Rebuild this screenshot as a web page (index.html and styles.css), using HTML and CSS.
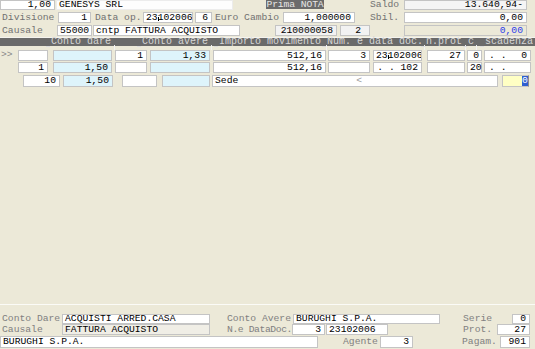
FILE: index.html
```html
<!DOCTYPE html>
<html>
<head>
<meta charset="utf-8">
<link rel="stylesheet" href="styles.css">
</head>
<body>
<div class="row r1">
  <div class="f r w55">1,00</div>
  <div class="f gen">GENESYS SRL</div>
  <div class="badge">Prima NOTA</div>
  <div class="l saldo">Saldo</div>
  <div class="f r big soft">13.640,94-</div>
</div>
<div class="row r2">
  <div class="l divis">Divisione</div>
  <div class="f r w33">1</div>
  <div class="l dataop">Data op.</div>
  <div class="f dt">23<span class="caret"></span>102006</div>
  <div class="f r w17 ml2">6</div>
  <div class="l euro">Euro Cambio</div>
  <div class="f r w72">1,000000</div>
  <div class="l sbil">Sbil.</div>
  <div class="f r big">0,00</div>
</div>
<div class="row r3">
  <div class="l caus">Causale</div>
  <div class="f w35">55000</div>
  <div class="f cntp">cntp FATTURA ACQUISTO</div>
  <div class="f r grey num9">210000058</div>
  <div class="f r grey two">2</div>
  <div class="f r big beige blue ml34">0,00</div>
</div>
<div class="hd">
  <div class="hc c0"></div>
  <div class="hc c1"><span>Conto dare</span></div>
  <div class="hc c2"><span>Conto avere</span></div>
  <div class="hc c3"><span>Importo movimento</span></div>
  <div class="hc c4"><span>Num. e data doc.</span></div>
  <div class="hc c5"><span>n.prot</span></div>
  <div class="hc c6"><span>c</span></div>
  <div class="hc c7"><span>scadenza</span></div>
</div>
<div class="row ga">
  <div class="l arrow">&gt;&gt;</div>
  <div class="f r a1"></div>
  <div class="f r cy a2"></div>
  <div class="f r a3">1</div>
  <div class="f r cy a4">1,33</div>
  <div class="f r a5">512,16</div>
  <div class="f r a6">3</div>
  <div class="f a7">23<span class="caret"></span>102006</div>
  <div class="f r a8">27</div>
  <div class="f r a9">0</div>
  <div class="f sc a10"><span>. .</span><span>0</span></div>
</div>
<div class="row gb">
  <div class="l arrow"></div>
  <div class="f r a1">1</div>
  <div class="f r cy a2">1,50</div>
  <div class="f r a3"></div>
  <div class="f r cy a4"></div>
  <div class="f r a5">512,16</div>
  <div class="f r a6"></div>
  <div class="f r a7">. . 102</div>
  <div class="f r a8"></div>
  <div class="f r a9">20</div>
  <div class="f a10 dots">. .</div>
</div>
<div class="row gc">
  <div class="f r c1f">10</div>
  <div class="f r cy c2f">1,50</div>
  <div class="f r c3f"></div>
  <div class="f r cy c4f"></div>
  <div class="f sede">Sede<span class="lt">&lt;</span></div>
  <div class="f yel"><span class="sel">0</span></div>
</div>
<div class="panel">
  <div class="row b1">
    <div class="l bl1">Conto Dare</div>
    <div class="f w148">ACQUISTI ARRED.CASA</div>
    <div class="l bl2">Conto Avere</div>
    <div class="f w147">BURUGHI S.P.A.</div>
    <div class="l bl3">Serie</div>
    <div class="f r w18">0</div>
  </div>
  <div class="row b2">
    <div class="l bl1">Causale</div>
    <div class="f w148 beige2">FATTURA ACQUISTO</div>
    <div class="l bl2b">N.e DataDoc.</div>
    <div class="f r w33">3</div>
    <div class="f dd">23102006</div>
    <div class="l bl4">Prot.</div>
    <div class="f r w33">27</div>
  </div>
  <div class="row b3">
    <div class="f bur">BURUGHI S.P.A.</div>
    <div class="l ag">Agente</div>
    <div class="f r w33">3</div>
    <div class="l pg">Pagam.</div>
    <div class="f r w30">901</div>
  </div>
</div>
</body>
</html>
```
FILE: styles.css
```css
* { box-sizing: border-box; margin: 0; padding: 0; }
html, body { width: 535px; height: 349px; overflow: hidden; }
body {
  background: #ece9d8;
  font-family: "Liberation Mono", "Courier New", monospace;
  font-size: 9.7px;
  color: #000;
  display: flex;
  flex-direction: column;
}
.row { display: flex; flex: none; align-items: stretch; }
.f {
  background: #fff;
  border: 1px solid #c4c4c4;
  white-space: nowrap;
  overflow: hidden;
  padding: 0 2px;
  line-height: 9px;
  flex: none;
}
.r { text-align: right; padding-right: 3px; }
.l { color: #727272; white-space: nowrap; line-height: 11px; flex: none; }
.grey { background: #f2f2f2; }
.beige { background: #ece9d8; }
.beige2 { background: #f0eee6; }
.soft { background: #f5f5f5; }
.blue { color: #2a3bea; }
.cy { background: #def4fb; }
.ml2 { margin-left: 2px; }
.ml34 { margin-left: 34px; }

.caret { display: inline-block; width: 1px; height: 4px; background: #000; margin-right: -1px; vertical-align: -1px; }

/* top rows */
.r1 { height: 10px; }
.r1 .f { line-height: 8px; }
.w55 { width: 55px; }
.gen { width: 177px; margin-left: 1px; background: #fdfdfd; border-color: #ececec; }
.badge {
  margin-left: 33px; width: 58px; height: 9px;
  background: #6b6b6b; color: #e6e6e6; text-align: center;
  line-height: 9px; font-size: 9.7px; flex: none;
  white-space: nowrap; letter-spacing: -0.1px;
}
.saldo { margin-left: 46px; width: 34px; line-height: 9px; }
.big { width: 123px; }

.r2 { height: 11px; margin-top: 2px; }
.divis { margin-left: 2px; width: 56px; }
.w33 { width: 33px; }
.dataop { margin-left: 4px; width: 48px; }
.dt { width: 50px; }
.w17 { width: 17px; }
.euro { margin-left: 3px; width: 68px; }
.w72 { width: 72px; }
.sbil { margin-left: 15px; width: 34px; }

.r3 { height: 11px; margin-top: 2px; }
.caus { margin-left: 2px; width: 55px; }
.w35 { width: 35px; }
.cntp { margin-left: 1px; width: 147px; }
.num9 { margin-left: 35px; width: 62px; }
.two { margin-left: 3px; width: 30px; padding-right: 8px; }

/* header bar */
.hd {
  display: flex; flex: none;
  height: 8px; margin-top: 2px;
  background: #6a6a6a; color: #d6d6d6;
  font-size: 10px; line-height: 8px;
  box-shadow: 0 -1px 0 #f4f3ee;
}
.hc { position: relative; text-align: right; padding-right: 4px; white-space: nowrap; flex: none; }
.hc span { position: relative; }
.hc span::before {
  content: ""; position: absolute; left: -5px; bottom: 0; width: 4px; height: 1px; background: #dcdcdc;
}
.hc::after {
  content: ""; position: absolute; right: 0; top: 7px; width: 1px; height: 5px; background: #f2f2f2;
}
.c0 { width: 50px; }
.c0::after { display: none; }
.c1 { width: 65px; }
.c2 { width: 97px; }
.c3 { width: 115px; padding-right: 6px; }
.c4 { width: 98px; padding-right: 2px; }
.c5 { width: 41px; }
.c6 { width: 11px; padding-right: 3px; }
.c7 { width: 58px; padding-right: 2px; }
.c7::after { display: none; }

/* grid rows */
.ga { height: 11px; margin-top: 4px; }
.gb { height: 11px; margin-top: 1px; }
.gc { height: 12px; margin-top: 2px; }
.gc .f { line-height: 10px; }
.arrow { width: 18px; padding-left: 1px; line-height: 10px; color: #888; }
.a1 { width: 30px; }
.a2 { margin-left: 5px; width: 59px; }
.a3 { margin-left: 3px; width: 32px; }
.a4 { margin-left: 3px; width: 60px; }
.a5 { margin-left: 3px; width: 113px; }
.a6 { margin-left: 2px; width: 42px; }
.a7 { margin-left: 3px; width: 49px; }
.a8 { margin-left: 5px; width: 38px; }
.a9 { margin-left: 2px; width: 15px; padding-right: 2px; overflow: visible; }
.a10 { margin-left: 2px; width: 47px; }
.sc { display: flex; justify-content: space-between; padding: 0 3px 0 4px; }
.dots { padding-left: 4px; }

.c1f { margin-left: 23px; width: 37px; }
.c2f { margin-left: 3px; width: 50px; }
.c3f { margin-left: 9px; width: 35px; }
.c4f { margin-left: 5px; width: 48px; }
.sede { margin-left: 2px; width: 286px; }
.lt { margin-left: 118px; color: #9a9a9a; }
.yel {
  margin-left: 4px; width: 27px; background: #ffffc4;
  text-align: right; padding-right: 0; border-right-color: #8a8a8a;
}
.sel { display: inline-block; background: #2f5fd0; color: #fff; width: 6px; text-align: center; }

/* bottom panel */
.panel {
  margin-top: auto;
  height: 45px;
  border-top: 1px solid #fbfbf7;
  display: flex;
  flex-direction: column;
  flex: none;
}
.panel .l { color: #808080; }
.b1 { height: 10px; margin-top: 9px; padding-left: 2px; }
.b1 .f { line-height: 8px; }
.b1 .l { line-height: 10px; }
.bl1 { width: 60px; }
.w148 { width: 148px; }
.bl2 { margin-left: 17px; width: 66px; }
.w147 { width: 147px; }
.bl3 { margin-left: 23px; width: 49px; }
.w18 { width: 18px; }
.b2 { height: 11px; margin-top: 0; padding-left: 2px; }
.bl2b { margin-left: 17px; width: 65px; letter-spacing: -0.4px; }
.dd { margin-left: 1px; width: 62px; }
.bl4 { margin-left: 75px; width: 34px; }
.b3 { height: 12px; margin-top: 1px; }
.b3 .f { line-height: 10px; }
.b3 .l { line-height: 12px; }
.bur { width: 318px; }
.ag { margin-left: 25px; width: 37px; }
.pg { margin-left: 49px; width: 38px; }
.w30 { width: 30px; }
```
